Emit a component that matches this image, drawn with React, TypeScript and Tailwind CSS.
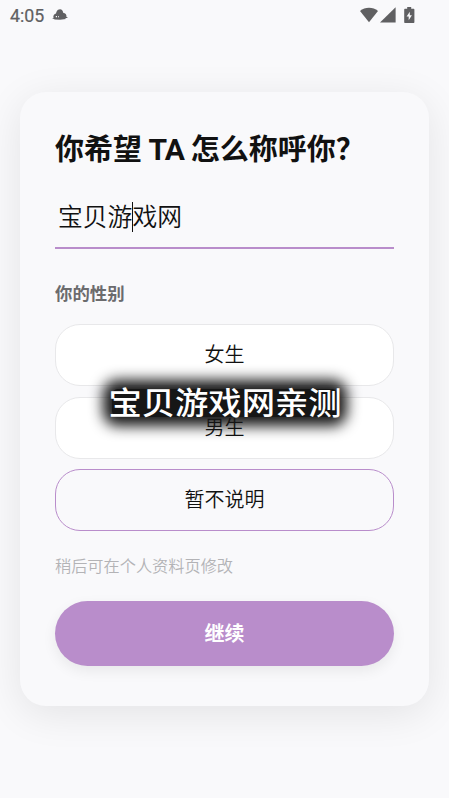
import React from "react";

const SANS = "font-['Noto_Sans_CJK_SC',sans-serif]";

function StatusBar() {
  return (
    <header className="flex h-8 items-center justify-between pl-2.5 pr-[34px] text-[#606062]">
      <div className="flex items-center">
        <span className="font-['Roboto',sans-serif] text-[17.8px] leading-8 [-webkit-text-stroke:0.2px_#606062]">4:05</span>
        <svg className="-mt-0.5 ml-2 h-4 w-4" viewBox="0 0 16 16" fill="currentColor">
          <path d="M1.5 11C.8 8.7 2.3 6.8 4 6.6C4.4 4.1 5.5 2.3 7.3 2.4C9.7 2 10.8 3.5 11.2 5.8C13.3 6.1 14.8 7.7 14.4 9.8L16 10.7L13 11.2L14 12L8 12.7L2.8 12.4L0 11Z" />
          <path d="M3.8 8.9h1.2v1.4H3.8zM6 9.3h1v1H6z" fill="#f9f9fb" />
        </svg>
      </div>
      <div className="-mt-[3px] flex items-center">
        <svg className="h-4 w-[18px]" viewBox="0 0 18 16" fill="currentColor">
          <path d="M0 4C5-.3 13-.3 18 4L9 15.3Z" />
        </svg>
        <svg className="ml-0.5 h-4 w-4" viewBox="0 0 16 16" fill="currentColor">
          <path d="M15.6 0.2V15.6H0Z" />
        </svg>
        <svg className="ml-2 h-[18px] w-[11px]" viewBox="0 0 11 18" fill="currentColor">
          <path d="M3.2 1h4v1.7h2.2c.6 0 1 .4 1 1v12.2c0 .6-.4 1-1 1H1.2c-.6 0-1-.4-1-1V3.7c0-.6.4-1 1-1h2z" />
          <path d="M5.8 5.8v3.4h2.1l-3.2 5v-3.7H2.6z" fill="#f9f9fb" />
        </svg>
      </div>
    </header>
  );
}

function Option({ label, selected = false }: { label: string; selected?: boolean }) {
  return (
    <button
      className={`flex h-[62px] w-full items-center justify-center rounded-[25px] border pb-0.5 text-[20px] font-[350] leading-7 text-[#111] ${
        selected ? "border-[#b98dcb] bg-[#f9f9fb]" : "border-[#e8e8ea] bg-white"
      }`}
    >
      {label}
    </button>
  );
}

export default function App() {
  return (
    <div className={`relative h-[798px] w-[449px] overflow-hidden bg-[#f9f9fb] ${SANS}`}>
      <StatusBar />
      <main className="mx-5 mt-[60px] h-[614px] rounded-[26px] bg-[#f9f9fb] px-[35px] pt-[34px] shadow-[0_8px_40px_rgba(0,0,0,0.09)]">
        <h1 className="h-[42px] whitespace-nowrap text-[29px] font-bold leading-[42px] text-[#111]">
          你希望 <span className="font-['Roboto',sans-serif] text-[30px] leading-none tracking-[-0.8px]">TA</span> 怎么称呼你？
        </h1>
        <div className="mt-[21px] flex h-[60px] items-center border-b-2 border-[#b98dcb] pb-[3px] pl-[3px] text-[24.8px] font-[350] leading-9 text-[#111]">
          <span className="-mt-1">宝贝游</span>
          <span className="-mr-px h-[30px] w-px bg-[#111]" />
          <span className="-mt-1">戏网</span>
        </div>
        <h2 className="mt-8 text-[17.4px] font-bold leading-6 text-[#6b6b6d]">你的性别</h2>
        <div className="mt-[19px] flex flex-col gap-[10.5px]">
          <Option label="女生" />
          <Option label="男生" />
          <Option label="暂不说明" selected />
        </div>
        <p className="mt-[22px] text-[16.2px] font-[350] leading-6 text-[#b3b3b6]">稍后可在个人资料页修改</p>
        <button className="mt-6 flex h-[65px] w-full items-center justify-center rounded-full bg-[#b98dcb] pb-0.5 text-[20px] font-bold text-white shadow-[0_5px_14px_rgba(0,0,0,0.07)]">
          继续
        </button>
      </main>
      <div className="absolute left-[108px] top-[383px] flex h-10 w-[234px] items-center justify-center whitespace-nowrap text-[33.3px] font-medium leading-none text-white">
        <div className="absolute inset-x-1 top-1.5 h-7 rounded-md bg-[#161616] shadow-[0_0_14px_9px_#161616]" />
        <span className="relative -top-0.5 scale-y-[0.91]">宝贝游戏网亲测</span>
      </div>
    </div>
  );
}
